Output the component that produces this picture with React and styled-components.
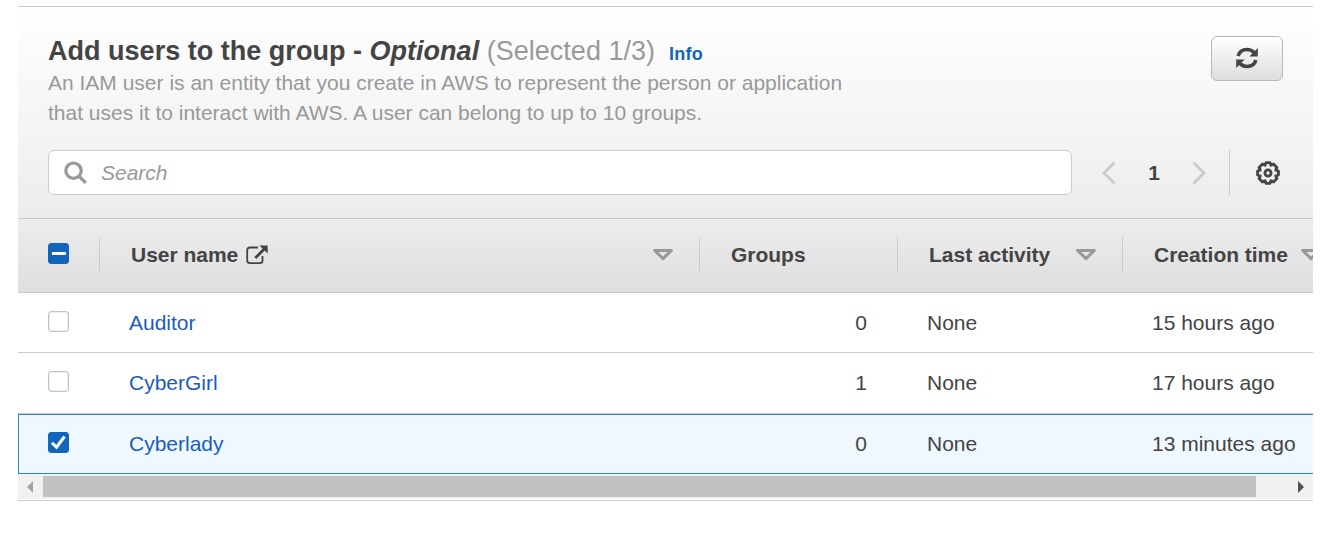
import React from "react";
import styled, { createGlobalStyle } from "styled-components";

const GlobalStyle = createGlobalStyle`
  * { box-sizing: border-box; }
  body {
    margin: 0;
    background: #fff;
    color: #444;
    font-family: "Liberation Sans", Arial, sans-serif;
    font-size: 21px;
    line-height: 30px;
    overflow: hidden;
  }
`;

const Panel = styled.section`
  width: 1295px;
  margin: 6px 0 0 18px;
  border-top: 1px solid #ccc;
  border-bottom: 1px solid #ccc;
  overflow: hidden;
`;

const Header = styled.header`
  height: 212px;
  padding: 29px 30px 0;
  border-bottom: 1px solid #ccc;
  background: linear-gradient(#fff, #ececec);
`;

const HeaderTop = styled.div`
  display: flex;
  justify-content: space-between;
  height: 114px;
`;

const Title = styled.h2`
  display: flex;
  align-items: baseline;
  margin: 0;
  font-size: 27px;
  line-height: 30px;
  letter-spacing: 0.02px;
  white-space: pre;
`;

const Counter = styled.span`
  font-weight: 400;
  color: #999;
`;

const InfoLink = styled.a`
  margin-left: 14px;
  font-size: 18px;
  letter-spacing: 0.2px;
  color: #1166bb;
`;

const Description = styled.p`
  margin: -1px 0 0;
  color: #999;
  white-space: nowrap;
`;

const RefreshButton = styled.button`
  display: flex;
  align-items: center;
  justify-content: center;
  width: 72px;
  height: 45px;
  padding: 0 0 2px;
  border: 1px solid #b8b8b8;
  border-radius: 6px;
  background: linear-gradient(#fff, #ddd);
`;

const Tools = styled.div`
  display: flex;
  align-items: center;
  height: 45px;
`;

const SearchBox = styled.label`
  display: flex;
  align-items: center;
  width: 1024px;
  height: 45px;
  padding-left: 15px;
  gap: 14px;
  border: 1px solid #ccc;
  border-radius: 6px;
  background: #fff;
  color: #999;
  font-style: italic;
`;

const Pager = styled.nav`
  display: flex;
  align-items: center;
  justify-content: space-between;
  width: 104px;
  margin-left: 30px;
  font-weight: 700;
`;

const Settings = styled.div`
  display: flex;
  align-items: center;
  height: 45px;
  margin-left: 23px;
  padding-left: 26px;
  border-left: 1px solid #ccc;
`;

const Grid = styled.div`
  display: grid;
  grid-template-columns: 81px 600px 198px 225px 225px;
  width: 1329px;
`;

const HeadRow = styled(Grid)`
  align-items: center;
  height: 74px;
  padding-bottom: 2px;
  border-bottom: 1px solid #ccc;
  background: linear-gradient(#ededed, #dedede);
  font-weight: 700;
`;

const HeadCell = styled.div`
  display: flex;
  align-items: center;
  gap: 8px;
  height: 36px;
  padding: 0 25px 0 31px;
  border-left: 1px solid #ccc;
  letter-spacing: -0.02px;
  white-space: nowrap;

  &:first-child { padding-left: 30px; border-left: 0; }
  & > svg:last-child:not(.external) { margin-left: auto; }
`;

const Row = styled(Grid)`
  align-items: center;
  height: ${(p) => (p.$tall ? 61 : 60)}px;
  border-bottom: 1px solid #ccc;
  ${(p) =>
    p.$selected &&
    `
    background: #f0f8ff;
    border: 1px solid #2a84d6;
    & > :first-child { padding-left: 29px; }
    grid-template-columns: 80px 600px 198px 225px 225px;
  `}
`;

const Cell = styled.div`
  padding: 0 30px;
  text-align: ${(p) => (p.$numeric ? "right" : "left")};
  color: ${(p) => (p.$link ? "#1a5dba" : "#444")};
  white-space: nowrap;
`;

const Checkbox = styled.span`
  display: flex;
  align-items: center;
  justify-content: center;
  width: 21px;
  height: 21px;
  margin-bottom: 3px;
  border: ${(p) => (p.$on ? "1px solid #1166bb" : "1px solid #c4c4c4")};
  border-radius: 3px;
  background: ${(p) => (p.$on ? "#1166bb" : "#fff")};
  box-shadow: ${(p) => (p.$on ? "none" : "inset 0 0 0 0.5px #ddd")};
`;

const ScrollTrack = styled.div`
  display: flex;
  align-items: center;
  height: 25px;
  margin-bottom: 1px;
  padding: 0 8px 0 9px;
  background: #f1f1f1;
`;

const ScrollThumb = styled.div`
  width: 1213px;
  height: 21px;
  margin: 0 42px 0 10px;
  background: #c1c1c1;
`;

const RefreshIcon = () => (
  <svg width="22" height="22" viewBox="0 0 22 22" fill="none">
    <path d="M2.1 9C3.2 5 6.7 2.5 11 2.5C13.8 2.5 16.2 3.5 18 5.5" stroke="#444" strokeWidth="3.6" />
    <path d="M21.8 1V9.4H13.4Z" fill="#444" />
    <path d="M19.9 13C18.8 17 15.3 19.5 11 19.5C8.2 19.5 5.8 18.5 4 16.5" stroke="#444" strokeWidth="3.6" />
    <path d="M.2 21V12.6H8.6Z" fill="#444" />
  </svg>
);

const SearchIcon = () => (
  <svg width="23" height="23" viewBox="0 0 23 23" fill="none" stroke="#999" strokeWidth="3.2">
    <circle cx="9.5" cy="9.7" r="7.7" />
    <path d="M14.8 15L21.7 21.9" />
  </svg>
);

const Chevron = ({ right }) => (
  <svg width="14" height="24" viewBox="0 0 14 24" fill="none" stroke="#ccc" strokeWidth="3">
    <path d={right ? "M1.5 1.5L12 12L1.5 22.5" : "M12.5 1.5L2 12L12.5 22.5"} />
  </svg>
);

const GearIcon = () => (
  <svg width="24" height="24" viewBox="0 0 24 24" fill="none" stroke="#444" strokeWidth="2.9" strokeLinejoin="round">
    <path d="M10 1.6H14L14.9 4.2L17.4 3L20.9 6.5L19.8 9.1L22.4 10V14L19.8 14.9L20.9 17.5L17.5 21L14.9 19.8L14 22.4H10L9.1 19.8L6.5 21L3.1 17.5L4.2 14.9L1.6 14V10L4.2 9.1L3.1 6.5L6.5 3L9.1 4.2Z" />
    <circle cx="12" cy="12" r="3.1" strokeWidth="2.8" />
  </svg>
);

const ExternalIcon = () => (
  <svg className="external" width="22" height="20" viewBox="0 0 22 20" fill="none" stroke="#444">
    <path d="M12 2.5H4Q1.2 2.5 1.2 5V15.5Q1.2 18.2 4 18.2H14Q16.5 18.2 16.5 15.5V11" strokeWidth="1.8" />
    <path d="M9.3 13L18.5 3.8" strokeWidth="2.8" />
    <path d="M13.3 .5H21.7V8.5Z" fill="#444" stroke="none" />
  </svg>
);

const SortIcon = () => (
  <svg width="22" height="13" viewBox="0 0 22 13" fill="none" stroke="#999" strokeWidth="3" strokeLinejoin="round">
    <path d="M2.6 2.4H19.4L11 10.6Z" />
  </svg>
);

const CheckIcon = () => (
  <svg width="15" height="15" viewBox="0 0 15 15" fill="none" stroke="#fff" strokeWidth="3">
    <path d="M.9 7.8L5.5 12.2L13.5 1.5" />
  </svg>
);

const MinusIcon = () => (
  <svg width="14" height="3" viewBox="0 0 14 3">
    <rect width="14" height="3" fill="#fff" />
  </svg>
);

const ScrollArrow = ({ right }) => (
  <svg width="6" height="12" viewBox="0 0 6 12">
    <path d={right ? "M0 0L6 6L0 12Z" : "M6 0L0 6L6 12Z"} fill={right ? "#505050" : "#a3a3a3"} />
  </svg>
);

const users = [
  { name: "Auditor", groups: 0, activity: "None", created: "15 hours ago" },
  { name: "CyberGirl", groups: 1, activity: "None", created: "17 hours ago" },
  { name: "Cyberlady", groups: 0, activity: "None", created: "13 minutes ago", selected: true },
];

export default function App() {
  return (
    <>
      <GlobalStyle />
      <Panel>
        <Header>
          <HeaderTop>
            <div>
              <Title>
                <span>Add users to the group - <em>Optional</em> <Counter>(Selected 1/3)</Counter></span>
                <InfoLink>Info</InfoLink>
              </Title>
              <Description>
                An IAM user is an entity that you create in AWS to represent the person or application
                <br />
                that uses it to interact with AWS. A user can belong to up to 10 groups.
              </Description>
            </div>
            <RefreshButton aria-label="Refresh"><RefreshIcon /></RefreshButton>
          </HeaderTop>
          <Tools>
            <SearchBox><SearchIcon />Search</SearchBox>
            <Pager><Chevron /><span>1</span><Chevron right /></Pager>
            <Settings><GearIcon /></Settings>
          </Tools>
        </Header>
        <HeadRow>
          <HeadCell><Checkbox $on><MinusIcon /></Checkbox></HeadCell>
          <HeadCell>User name <ExternalIcon /><SortIcon /></HeadCell>
          <HeadCell>Groups</HeadCell>
          <HeadCell>Last activity<SortIcon /></HeadCell>
          <HeadCell>Creation time<SortIcon /></HeadCell>
        </HeadRow>
        {users.map((u, i) => (
          <Row key={u.name} $selected={u.selected} $tall={i === 1}>
            <Cell><Checkbox $on={u.selected}>{u.selected && <CheckIcon />}</Checkbox></Cell>
            <Cell $link>{u.name}</Cell>
            <Cell $numeric>{u.groups}</Cell>
            <Cell>{u.activity}</Cell>
            <Cell>{u.created}</Cell>
          </Row>
        ))}
        <ScrollTrack>
          <ScrollArrow /><ScrollThumb /><ScrollArrow right />
        </ScrollTrack>
      </Panel>
    </>
  );
}
